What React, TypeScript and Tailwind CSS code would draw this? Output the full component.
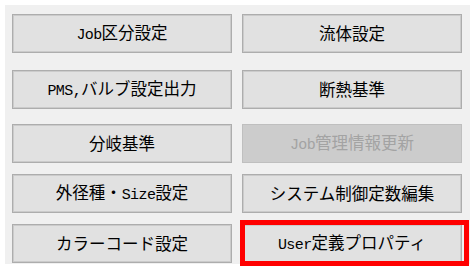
import { Fragment } from 'react';

type Btn = { label: string; disabled?: boolean; marked?: boolean };

// rows of the settings menu, left / right
const ROWS: { mt: string; items: [Btn, Btn] }[] = [
  { mt: 'mt-[9px]', items: [{ label: 'Job区分設定' }, { label: '流体設定' }] },
  { mt: 'mt-[17px]', items: [{ label: 'PMS,バルブ設定出力' }, { label: '断熱基準' }] },
  { mt: 'mt-[15px]', items: [{ label: '分岐基準' }, { label: 'Job管理情報更新', disabled: true }] },
  { mt: 'mt-[11px]', items: [{ label: '外径種・Size設定' }, { label: 'システム制御定数編集' }] },
  { mt: 'mt-[11px]', items: [{ label: 'カラーコード設定' }, { label: 'User定義プロパティ', marked: true }] },
];

// latin runs get a half-width mono face, like the old Gothic UI font
function Label({ text }: { text: string }) {
  const parts = text.split(/([A-Za-z0-9,]+)/).filter(Boolean);
  return (
    <span className="whitespace-nowrap">
      {parts.map((p, i) => /^[A-Za-z0-9,]+$/.test(p)
        ? <span key={i} className="font-['Liberation_Mono',monospace] text-[15px] tracking-[-0.6px]">{p}</span>
        : <Fragment key={i}>{p}</Fragment>)}
    </span>
  );
}

function MenuButton({ b }: { b: Btn }) {
  return (
    <div className="relative w-[220px] h-[39px]">
      <div
        className={
          b.disabled
            ? 'w-full h-full flex items-center justify-center bg-[#cccccc] border border-[#bfbfbf] text-[#a3a3a3]'
            : 'w-full h-full flex items-center justify-center bg-[#e1e1e1] border border-[#adadad] shadow-[inset_0_0_0_1px_#cbcbcb] text-black'
        }
      >
        <Label text={b.label} />
      </div>
      {b.marked && (
        <div className="absolute left-[-2px] top-[-4px] w-[229px] h-[46px] border-[5px] border-[#ff0000]" />
      )}
    </div>
  );
}

export default function App() {
  return (
    <div className="w-[476px] h-[275px] bg-white pt-[5px] pl-[5px] font-['Noto_Sans_CJK_JP',sans-serif] text-[16.5px] leading-none">
      <div className="w-[465px] h-[259px] bg-[#f0f0f0] pl-[7px] flex flex-col">
        {ROWS.map((r, ri) => (
          <div key={ri} className={`${r.mt} flex gap-[10px]`}>
            <MenuButton b={r.items[0]} />
            <MenuButton b={r.items[1]} />
          </div>
        ))}
      </div>
    </div>
  );
}
